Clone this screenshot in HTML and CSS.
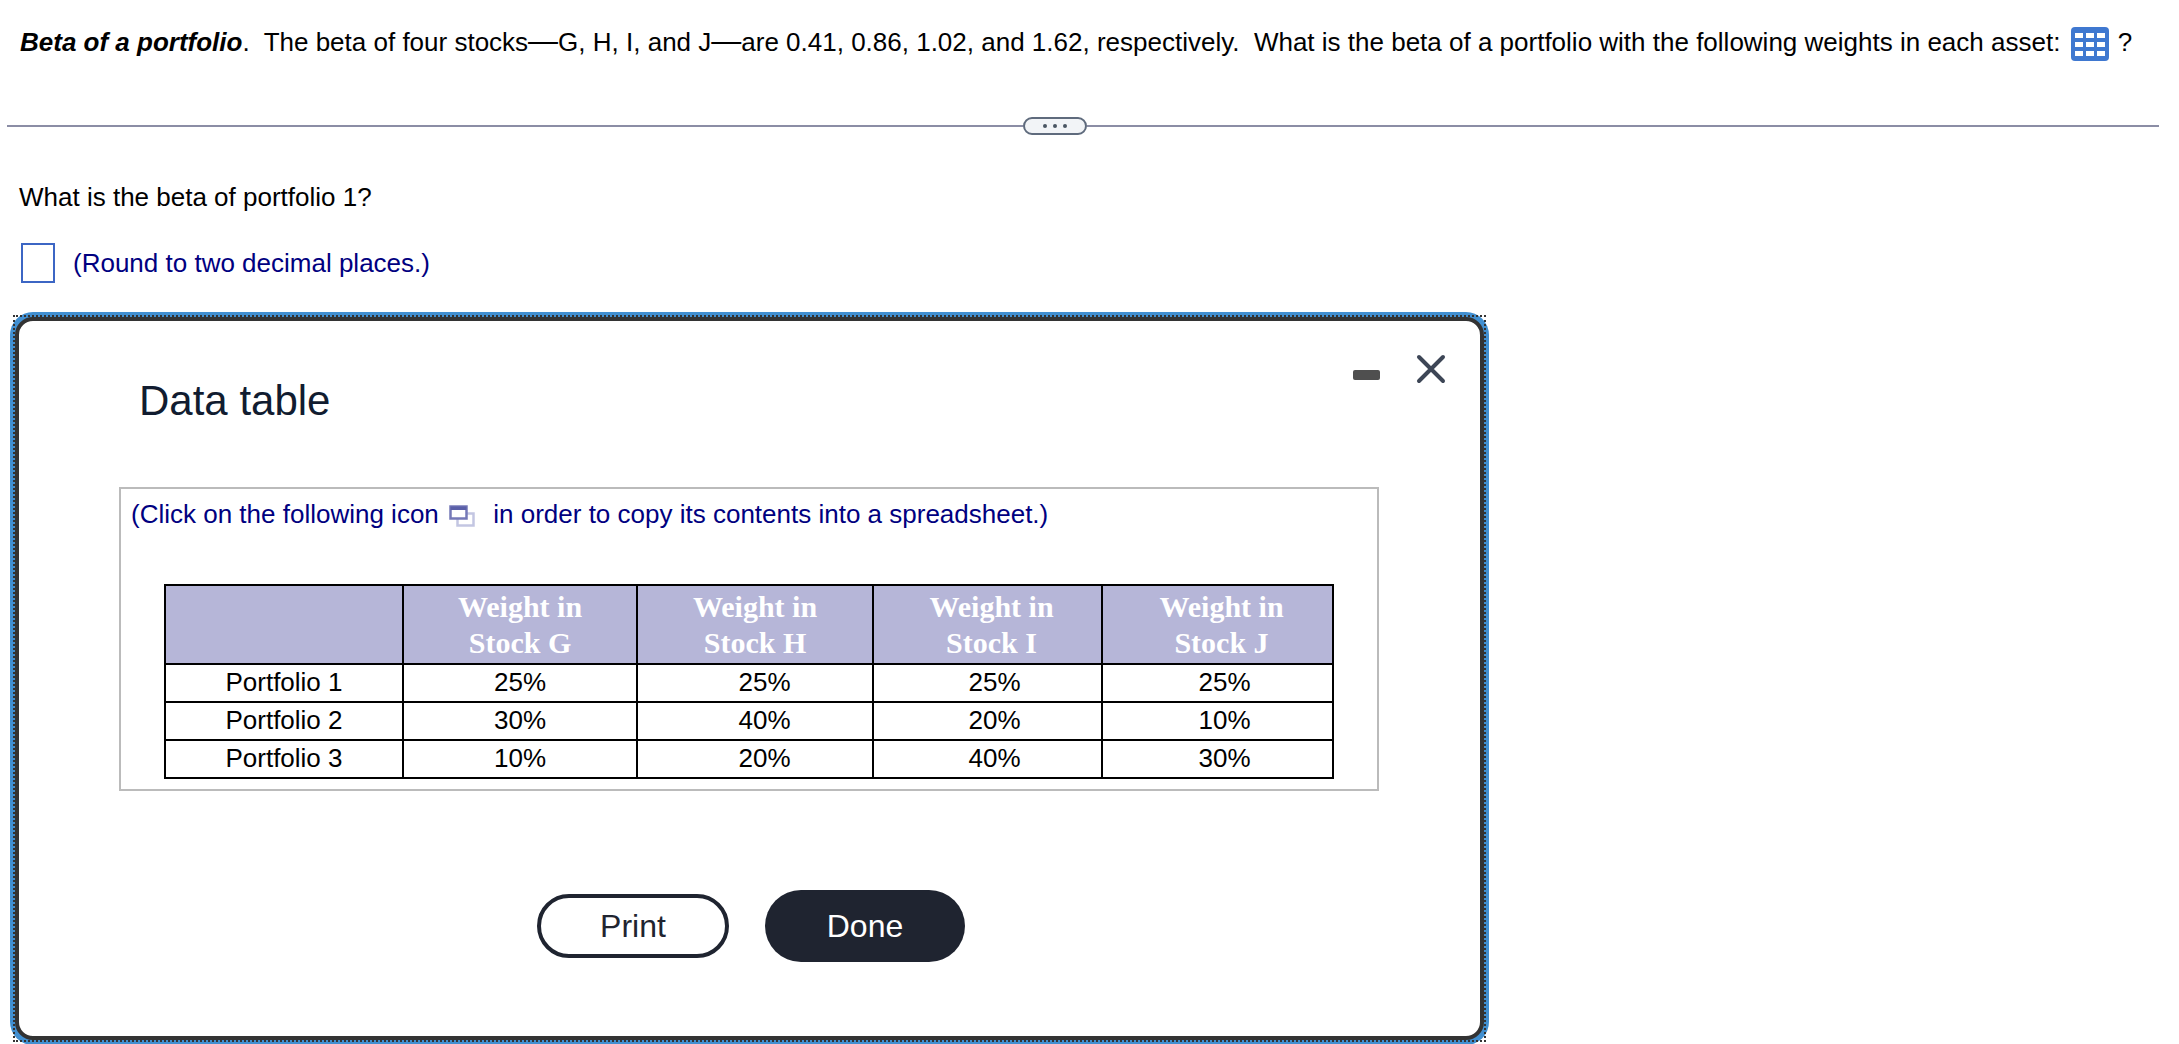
FILE: index.html
```html
<!DOCTYPE html>
<html lang="en">
<head>
    <meta charset="UTF-8">
    <meta name="viewport" content="width=device-width, initial-scale=1.0">
    <title>Beta of a portfolio</title>
    <link rel="stylesheet" href="styles.css">
</head>
<body>

<div class="question">
    <em class="term">Beta of a portfolio</em>.&nbsp; The beta of four stocks<span class="dash">&mdash;</span>G, H, I, and J<span class="dash">&mdash;</span>are 0.41, 0.86, 1.02, and 1.62, respectively.&nbsp; What is the beta of a portfolio with the following weights in each asset:
    <svg class="grid-icon" width="38" height="34" viewBox="0 0 38 34">
        <rect width="38" height="34" rx="4" fill="#3f78d0"/>
        <g fill="#fff">
            <rect x="4" y="6" width="8" height="5"/><rect x="15" y="6" width="8" height="5"/><rect x="26" y="6" width="8" height="5"/>
            <rect x="4" y="15" width="8" height="5"/><rect x="15" y="15" width="8" height="5"/><rect x="26" y="15" width="8" height="5"/>
            <rect x="4" y="24" width="8" height="5"/><rect x="15" y="24" width="8" height="5"/><rect x="26" y="24" width="8" height="5"/>
        </g>
    </svg>
    ?
</div>

<div class="divider">
    <div class="divider-line divider-left"></div>
    <div class="more-pill"><span></span><span></span><span></span></div>
    <div class="divider-line"></div>
</div>

<div class="prompt">What is the beta of portfolio 1?</div>

<div class="answer-row">
    <div class="answer-box"></div>
    <span class="hint">(Round to two decimal places.)</span>
</div>

<div class="dialog-frame">
    <div class="dialog">
        <div class="dialog-head">
            <h1>Data table</h1>
            <div class="dialog-controls">
                <div class="minimize"></div>
                <svg class="close" width="32" height="32" viewBox="0 0 32 32">
                    <path d="M4 4L28 28M28 4L4 28" stroke="#3d4656" stroke-width="4" stroke-linecap="round" fill="none"/>
                </svg>
            </div>
        </div>

        <div class="data-box">
            <div class="copy-note">
                (Click on the following icon
                <svg class="copy-icon" width="26" height="22" viewBox="0 0 26 22">
                    <rect x="8.5" y="8.5" width="16" height="12" fill="none" stroke="#c3c6e2" stroke-width="2.5"/>
                    <rect x="1.5" y="1.5" width="16" height="12" fill="#fff" stroke="#7579b8" stroke-width="2.5"/>
                    <rect x="1.5" y="1.5" width="16" height="3.5" fill="#5a5fa8"/>
                </svg>
                in order to copy its contents into a spreadsheet.)
            </div>

            <table class="weights">
                <tr>
                    <th class="col-name"></th>
                    <th class="col-g">Weight in<br>Stock G</th>
                    <th class="col-h">Weight in<br>Stock H</th>
                    <th class="col-i">Weight in<br>Stock I</th>
                    <th class="col-j">Weight in<br>Stock J</th>
                </tr>
                <tr><td>Portfolio 1</td><td>25%</td><td>25%</td><td>25%</td><td>25%</td></tr>
                <tr><td>Portfolio 2</td><td>30%</td><td>40%</td><td>20%</td><td>10%</td></tr>
                <tr><td>Portfolio 3</td><td>10%</td><td>20%</td><td>40%</td><td>30%</td></tr>
            </table>
        </div>

        <div class="dialog-buttons">
            <button class="btn-print">Print</button>
            <button class="btn-done">Done</button>
        </div>
    </div>
</div>

</body>
</html>
```

FILE: styles.css
```css
html, body {
    height: 1044px;
    overflow: hidden;
}

body {
    margin: 0;
    background-color: white;
    font-family: "Liberation Sans", Arial, sans-serif;
    font-size: 26px;
    color: #000;
}

.question {
    height: 34px;
    padding: 25px 0 0 20px;
    line-height: 34px;
    white-space: nowrap;
}

.term {
    font-weight: bold;
}

.dash {
    font-size: 30px;
    line-height: 0;
}

.grid-icon {
    vertical-align: middle;
    margin: 0 2px 0 3px;
}

.divider {
    display: flex;
    align-items: center;
    height: 18px;
    margin: 58px 20px 0 7px;
}

.divider-line {
    flex: 1;
    height: 2px;
    background-color: #8b8da5;
}

.divider-left {
    flex: none;
    width: 1016px;
}

.more-pill {
    display: flex;
    justify-content: center;
    align-items: center;
    gap: 6px;
    width: 64px;
    height: 18px;
    box-sizing: border-box;
    border: 2px solid #5f6b7d;
    border-radius: 9px;
    background-color: #f2f4f7;
}

.more-pill span {
    width: 4px;
    height: 4px;
    border-radius: 50%;
    background-color: #4b5563;
}

.prompt {
    margin: 47px 0 0 19px;
    line-height: 30px;
}

.answer-row {
    display: flex;
    align-items: center;
    gap: 18px;
    margin: 31px 0 0 21px;
}

.answer-box {
    box-sizing: border-box;
    width: 34px;
    height: 40px;
    border: 2px solid #3c66c4;
}

.hint {
    color: #000080;
}

.dialog-frame {
    width: 1469px;
    height: 723px;
    margin: 34px 0 0 15px;
    outline: 2px dotted #333;
}

.dialog {
    box-sizing: border-box;
    width: 100%;
    height: 100%;
    border: 4px solid #333;
    border-radius: 18px;
    background-color: white;
    box-shadow: 0 0 0 5px #418fd0;
}

.dialog-head {
    display: flex;
    justify-content: space-between;
    height: 166px;
}

.dialog-head h1 {
    margin: 54px 0 0 120px;
    font-size: 42px;
    font-weight: normal;
    line-height: 52px;
    color: #111c30;
}

.dialog-controls {
    display: flex;
    align-items: flex-start;
    gap: 35px;
    margin: 32px 33px 0 0;
}

.minimize {
    width: 27px;
    height: 10px;
    margin-top: 17px;
    border-radius: 2px;
    background-color: #4f4f4f;
}

.data-box {
    box-sizing: border-box;
    width: 1260px;
    height: 304px;
    margin-left: 100px;
    border: 2px solid #bbb;
}

.copy-note {
    padding: 8px 0 0 10px;
    height: 87px;
    line-height: 34px;
    color: #000080;
    white-space: nowrap;
}

.copy-icon {
    vertical-align: middle;
    margin: 0 11px 0 3px;
}

.weights {
    border-collapse: collapse;
    margin-left: 43px;
    table-layout: fixed;
    width: 1168px;
    text-align: center;
}

.weights th, .weights td {
    border: 2px solid black;
    padding: 0;
}

.weights th {
    height: 76px;
    padding-top: 1px;
    background-color: #b6b6d8;
    color: white;
    font-family: "Liberation Serif", "Times New Roman", serif;
    font-size: 30px;
    font-weight: bold;
    line-height: 36px;
}

.weights td {
    height: 34px;
    padding-bottom: 2px;
    line-height: 34px;
}

/* headers and values in the last columns sit right of centre */
.weights th.col-i, .weights th.col-j {
    padding-left: 8px;
}

.weights td:nth-child(3) {
    padding-left: 19px;
}

.weights td:nth-child(4), .weights td:nth-child(5) {
    padding-left: 14px;
}

.col-name { width: 236px; }
.col-g { width: 232px; }
.col-h { width: 234px; }
.col-i { width: 219px; }
.col-j { width: 221px; }

.dialog-buttons {
    display: flex;
    align-items: center;
    gap: 36px;
    margin: 99px 0 0 518px;
}

.dialog-buttons button {
    box-sizing: border-box;
    font-family: "Liberation Sans", Arial, sans-serif;
    font-size: 32px;
    color: #1f2430;
    border-radius: 36px;
    cursor: pointer;
}

.btn-print {
    width: 192px;
    height: 64px;
    border: 4px solid #1f2430;
    background-color: white;
}

.dialog-buttons .btn-done {
    width: 200px;
    height: 72px;
    border: none;
    background-color: #1f2430;
    color: white;
}
```
